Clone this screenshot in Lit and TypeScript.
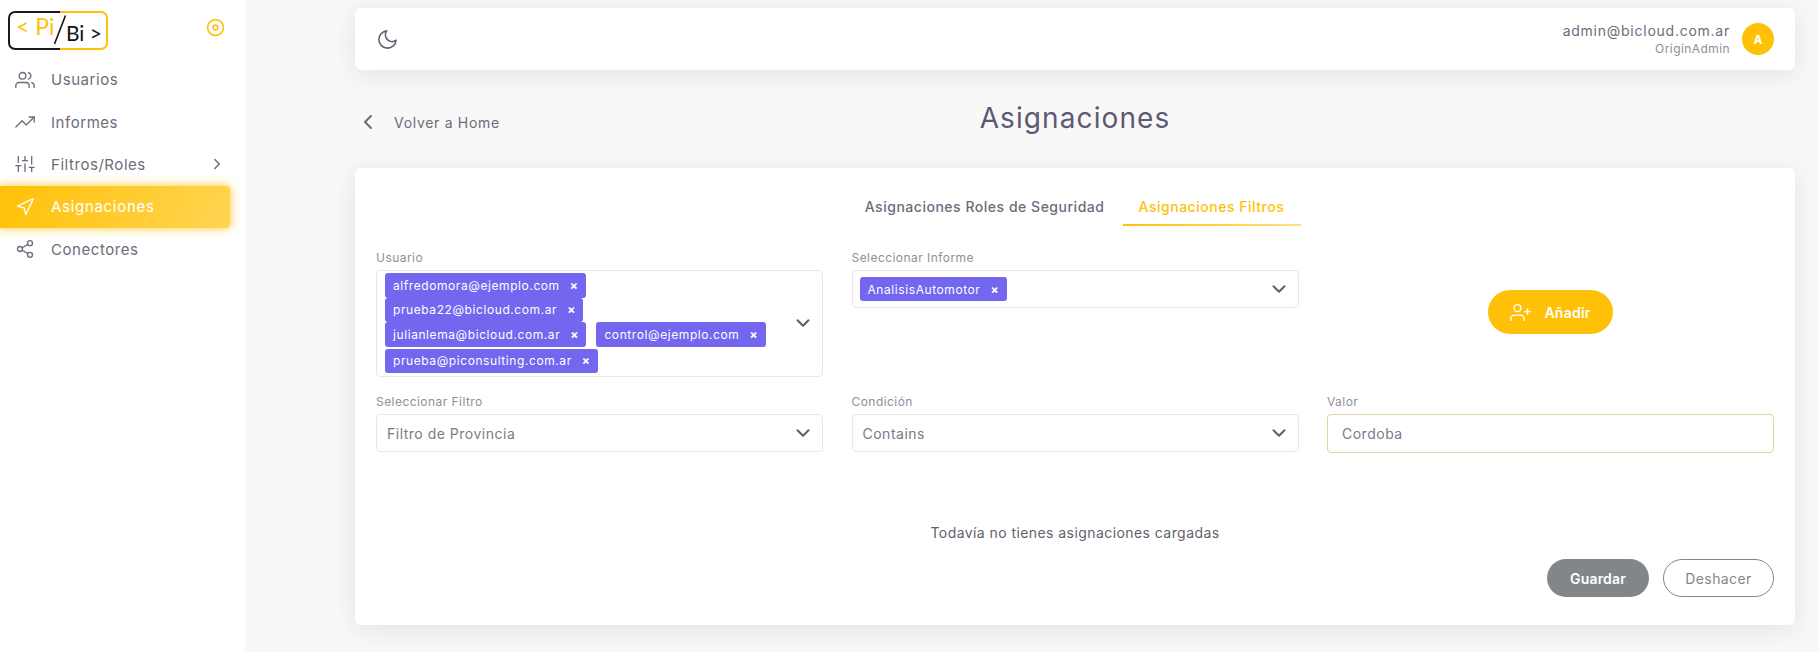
import { LitElement, html, css, svg } from "lit";
import { customElement } from "lit/decorators.js";

const ic = (body: unknown, cls = "ic") => html`<svg class=${cls} viewBox="0 0 24 24" fill="none" stroke="currentColor" stroke-width="2" stroke-linecap="round" stroke-linejoin="round">${body}</svg>`;
const users = svg`<path d="M17 21v-2a4 4 0 0 0-4-4H5a4 4 0 0 0-4 4v2"/><circle cx="9" cy="7" r="4"/><path d="M23 21v-2a4 4 0 0 0-3-3.87"/><path d="M16 3.13a4 4 0 0 1 0 7.75"/>`;
const trending = svg`<polyline points="23 6 13.5 15.5 8.5 10.5 1 18"/><polyline points="17 6 23 6 23 12"/>`;
const sliders = svg`<line x1="4" y1="21" x2="4" y2="14"/><line x1="4" y1="10" x2="4" y2="3"/><line x1="12" y1="21" x2="12" y2="12"/><line x1="12" y1="8" x2="12" y2="3"/><line x1="20" y1="21" x2="20" y2="16"/><line x1="20" y1="12" x2="20" y2="3"/><line x1="1" y1="14" x2="7" y2="14"/><line x1="9" y1="8" x2="15" y2="8"/><line x1="17" y1="16" x2="23" y2="16"/>`;
const nav = svg`<polygon points="3 11 22 2 13 21 11 13 3 11"/>`;
const share = svg`<circle cx="18" cy="5" r="3"/><circle cx="6" cy="12" r="3"/><circle cx="18" cy="19" r="3"/><line x1="8.59" y1="13.51" x2="15.42" y2="17.49"/><line x1="15.41" y1="6.51" x2="8.59" y2="10.49"/>`;
const moon = svg`<path d="M21 12.79A9 9 0 1 1 11.21 3 7 7 0 0 0 21 12.79z"/>`;
const userPlus = svg`<path d="M16 21v-2a4 4 0 0 0-4-4H5a4 4 0 0 0-4 4v2"/><circle cx="8.5" cy="7" r="4"/><line x1="20" y1="8" x2="20" y2="14"/><line x1="23" y1="11" x2="17" y2="11"/>`;
const disc = svg`<circle cx="12" cy="12" r="10"/><circle cx="12" cy="12" r="3"/>`;
const chevD = svg`<polyline points="6 9 12 15 18 9"/>`;
const chevR = svg`<polyline points="9 18 15 12 9 6"/>`;
const chevL = svg`<polyline points="15 18 9 12 15 6"/>`;

@customElement("app-root")
export class AppRoot extends LitElement {
  static styles = css`
    :host { display: block; height: 652px; overflow: hidden; font-family: Inter, "Liberation Sans", sans-serif; color: #6e6b7b; background: #f8f8f8; }
    * { box-sizing: border-box; }
    .page { display: flex; height: 652px; }
    aside { width: 245px; flex: none; background: #fff; display: flex; flex-direction: column; }
    .brand { height: 58.5px; display: flex; align-items: flex-start; justify-content: space-between; padding: 10px 20px 0 8px; }
    .logo { width: 101px; height: 41px; display: block; }
    .brand .disc { width: 19px; height: 19px; color: #ffc107; margin-top: 8px; }
    .menu { display: flex; flex-direction: column; }
    .item { height: 42.4px; width: 230px; display: flex; align-items: center; padding-left: 15px; font-size: 15px; letter-spacing: 0.55px; color: #6e6b7b; border-radius: 0 4px 4px 0; }
    .item.active { letter-spacing: 0.7px; }
    .item .ic { width: 20px; height: 20px; margin-right: 16px; stroke-width: 1.6; flex: none; }
    .item .more { width: 18px; height: 18px; margin-left: auto; margin-right: 4px; stroke-width: 2; }
    .item.active { color: #fff; background: linear-gradient(118deg, #ffc107, #ffd452); box-shadow: 0 0 10px 1px rgba(255, 193, 7, 0.7); }
    main { flex: 1; padding: 8px 24px 0 110px; min-width: 0; }
    .topbar { height: 62px; background: #fff; border-radius: 6px; box-shadow: 0 4px 24px 0 rgba(34, 41, 47, 0.1); display: flex; align-items: center; justify-content: space-between; padding: 0 21px; }
    .topbar .moon { width: 23px; height: 23px; stroke-width: 1.7; color: #625f6e; }
    .user { display: flex; align-items: center; gap: 12px; }
    .who { text-align: right; }
    .mail { font-size: 14px; letter-spacing: 0.75px; line-height: 19px; }
    .role { font-size: 12px; letter-spacing: 0.42px; line-height: 18px; color: #8f8c9a; }
    .avatar { width: 32px; height: 32px; border-radius: 50%; background: #ffc107; color: #fff; font-size: 12px; font-weight: 700; display: flex; align-items: center; justify-content: center; }
    .head { height: 98px; display: grid; grid-template-columns: 1fr auto 1fr; align-items: center; }
    .back { display: flex; align-items: center; font-size: 14px; letter-spacing: 0.7px; padding: 6px 0 0 1px; }
    .back .ic { width: 24px; height: 24px; margin-right: 14px; }
    h1 { margin: 0 0 2px; font-size: 28px; font-weight: 400; letter-spacing: 1.1px; color: #5e5873; }
    .card { height: 457px; background: #fff; border-radius: 6px; box-shadow: 0 4px 24px 0 rgba(34, 41, 47, 0.1); padding: 0 21px; display: flex; flex-direction: column; }
    .tabs { height: 58px; padding-top: 24px; display: flex; justify-content: center; font-size: 14px; letter-spacing: 0.52px; font-weight: 500; }
    .tab { height: 34px; padding: 6px 16px 0; }
    .tab.first { padding-right: 18px; }
    .tab.on { color: #ffc107; position: relative; padding-right: 17px; }
    .tab.on::after { content: ""; position: absolute; left: 0; right: 0; bottom: 0; height: 2.5px; background: linear-gradient(90deg, #ffc107, rgba(255, 193, 7, 0.5)); }
    .grid { display: grid; grid-template-columns: 447px 447px 447px; column-gap: 28.5px; padding-top: 24px; align-items: start; }
    .f { display: flex; flex-direction: column; }
    label { font-size: 12px; line-height: 15px; letter-spacing: 0.45px; color: #908e9b; margin-bottom: 5px; }
    .sel { border: 1px solid #e8e7ea; border-radius: 4px; min-height: 38px; display: flex; align-items: center; justify-content: space-between; padding: 0 8px 0 10px; font-size: 14px; letter-spacing: 0.5px; color: #7d7a88; }
    .sel .ic { width: 22px; height: 22px; color: #625f6e; flex: none; stroke-width: 2.3; }
    .multi { height: 107px; padding: 1px 8px 2px 8px; }
    .chips { display: flex; flex-wrap: wrap; column-gap: 10px; align-content: flex-start; width: 400px; }
    .sel.single { padding-left: 7px; }
    .chip { height: 24.5px; background: #7367f0; color: #fff; border-radius: 3px; padding: 0 8px; display: flex; align-items: center; font-size: 12px; letter-spacing: 0.58px; white-space: nowrap; }
    .chip b { font-weight: 700; font-size: 12px; margin-left: 10px; letter-spacing: 0; }
    .chip.low { margin-top: 2px; }
    .break { flex-basis: 100%; height: 0; }
    .add { display: flex; justify-content: center; padding: 40px 0 0 0; }
    .btn-add { width: 125px; height: 44px; border-radius: 22px; background: #ffc107; color: #fff; font-weight: 600; font-size: 14px; letter-spacing: 0.25px; display: flex; align-items: center; justify-content: center; gap: 13px; }
    .btn-add .ic { width: 21px; height: 21px; stroke-width: 1.6; }
    .row2 { padding-top: 17px; }
    .input { border: 1px solid #e2d3a8; border-radius: 4px; height: 38.5px; display: flex; align-items: center; padding-left: 14px; font-size: 14px; letter-spacing: 0.5px; color: #7d7a88; }
    .empty { text-align: center; font-size: 14px; letter-spacing: 0.43px; color: #625f6e; margin: 70.5px 0 0; line-height: 20px; }
    .actions { display: flex; justify-content: flex-end; gap: 14px; margin-top: 16px; }
    .btn { height: 38px; border-radius: 19px; font-size: 14px; display: flex; align-items: center; justify-content: center; }
    .save { width: 102px; background: #82868b; color: #fff; font-weight: 600; letter-spacing: 0.2px; }
    .undo { width: 111px; border: 1px solid #82868b; color: #82868b; letter-spacing: 0.4px; }
  `;

  private chev() { return ic(chevD); }

  render() {
    return html`<div class="page">
      <aside>
        <div class="brand">
          <svg class="logo" viewBox="0 0 101 41" role="img" aria-label="Pi Bi">
            <path d="M52 2H7a6 6 0 0 0-6 6v25a6 6 0 0 0 6 6h45" fill="none" stroke="#1a1a1a" stroke-width="2"/>
            <path d="M52 2h41a6 6 0 0 1 6 6v25a6 6 0 0 1-6 6H52" fill="none" stroke="#ffc107" stroke-width="2"/>
            <text x="8" y="25" font-family="Lato, sans-serif" font-size="23" fill="#ffc107">&lt; Pi</text>
            <line x1="46.5" y1="34" x2="57.5" y2="5.5" stroke="#111" stroke-width="1.6"/>
            <text x="58" y="31" font-family="Lato, sans-serif" font-size="21" fill="#111">Bi &gt;</text>
          </svg>
          ${ic(disc, "ic disc")}
        </div>
        <nav class="menu">
          <div class="item">${ic(users)}Usuarios</div>
          <div class="item">${ic(trending)}Informes</div>
          <div class="item">${ic(sliders)}Filtros/Roles${ic(chevR, "ic more")}</div>
          <div class="item active">${ic(nav)}Asignaciones</div>
          <div class="item">${ic(share)}Conectores</div>
        </nav>
      </aside>
      <main>
        <header class="topbar">
          ${ic(moon, "ic moon")}
          <div class="user">
            <div class="who"><div class="mail">admin@bicloud.com.ar</div><div class="role">OriginAdmin</div></div>
            <div class="avatar">A</div>
          </div>
        </header>
        <div class="head">
          <div class="back">${ic(chevL)}Volver a Home</div>
          <h1>Asignaciones</h1>
          <div></div>
        </div>
        <section class="card">
          <div class="tabs">
            <div class="tab first">Asignaciones Roles de Seguridad</div>
            <div class="tab on">Asignaciones Filtros</div>
          </div>
          <div class="grid">
            <div class="f">
              <label>Usuario</label>
              <div class="sel multi">
                <div class="chips">
                  <span class="chip">alfredomora@ejemplo.com<b>×</b></span><span class="break"></span>
                  <span class="chip">prueba22@bicloud.com.ar<b>×</b></span><span class="break"></span>
                  <span class="chip">julianlema@bicloud.com.ar<b>×</b></span>
                  <span class="chip">control@ejemplo.com<b>×</b></span><span class="break"></span>
                  <span class="chip low">prueba@piconsulting.com.ar<b>×</b></span>
                </div>
                ${this.chev()}
              </div>
            </div>
            <div class="f">
              <label>Seleccionar Informe</label>
              <div class="sel single"><span class="chip">AnalisisAutomotor<b>×</b></span>${this.chev()}</div>
            </div>
            <div class="add"><div class="btn-add">${ic(userPlus)}Añadir</div></div>
          </div>
          <div class="grid row2">
            <div class="f"><label>Seleccionar Filtro</label><div class="sel">Filtro de Provincia${this.chev()}</div></div>
            <div class="f"><label>Condición</label><div class="sel">Contains${this.chev()}</div></div>
            <div class="f"><label>Valor</label><div class="input">Cordoba</div></div>
          </div>
          <p class="empty">Todavía no tienes asignaciones cargadas</p>
          <div class="actions">
            <div class="btn save">Guardar</div>
            <div class="btn undo">Deshacer</div>
          </div>
        </section>
      </main>
    </div>`;
  }
}
